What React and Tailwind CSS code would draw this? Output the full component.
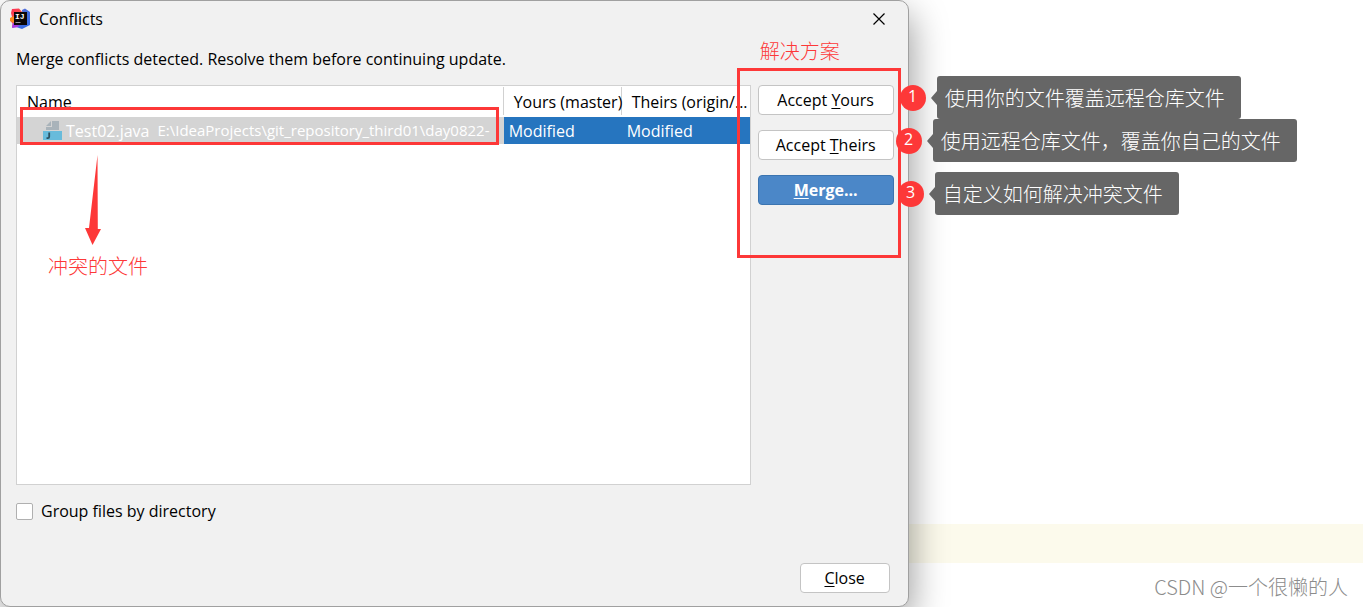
import React from "react";

function IdeaLogo() {
  return (
    <svg viewBox="0 0 22 22" className="size-[22px] shrink-0" aria-hidden="true">
      <defs>
        <linearGradient id="warm" x1="0" y1="0" x2="0.6" y2="1">
          <stop offset="0" stopColor="#fe2857" />
          <stop offset="0.5" stopColor="#f9504a" />
          <stop offset="1" stopColor="#b32bd8" />
        </linearGradient>
        <linearGradient id="cool" x1="0" y1="0" x2="1" y2="1">
          <stop offset="0" stopColor="#8a5bc8" />
          <stop offset="0.4" stopColor="#4a6fdc" />
          <stop offset="1" stopColor="#2f6be8" />
        </linearGradient>
      </defs>
      <path d="M3 1 10 .500l4 4.500-1 13-5 .5L3 19.500l.5-4L1.500 13 3 9 2 5z" fill="url(#warm)" />
      <path d="M1 10 5 8v7l-4-2z" fill="#fd8a1e" />
      <path d="m13 2 3-1.500 5 3.500v13l-8 4-9-3 10-2z" fill="url(#cool)" />
      <path d="M3 20l1-5 7 3-4 1.500z" fill="#a63be0" />
      <rect x="5" y="4" width="13" height="13" fill="#0b0708" />
      <text x="6" y="11" fontSize="8" fontWeight="700" fontFamily="Liberation Mono, monospace" fill="#fff">
        IJ
      </text>
      <rect x="6.500" y="14" width="5" height="1" fill="#999" />
    </svg>
  );
}

function JavaFileIcon() {
  return (
    <svg viewBox="0 0 19 19" className="size-[19px] shrink-0" aria-hidden="true">
      <path d="M9 0h7v9H3V6h6z" fill="#a9b3ba" />
      <path d="M8 0v5H3z" fill="#a9b3ba" />
      <rect y="10" width="19" height="9" fill="#68bbdb" />
      <path d="M6.200 11.500v4.200q0 1.500-1.400 1.500H3.500" fill="none" stroke="#2b4f5e" strokeWidth="1.800" />
    </svg>
  );
}

function CloseGlyph() {
  return (
    <svg viewBox="0 0 12 12" className="size-3" aria-hidden="true">
      <path d="M.5.5l11 11M11.500.5l-11 11" stroke="#000" strokeWidth="1.200" />
    </svg>
  );
}

function Callout({ number, place, children }) {
  return (
    <div className={`absolute z-30 flex h-[43px] items-center whitespace-nowrap text-white ${place}`}>
      <span className="flex size-[26px] items-center justify-center rounded-full bg-[#fd3838] pb-1 text-base leading-none">
        {number}
      </span>
      <span className="ml-[5px] h-0 w-0 border-y-[7px] border-r-[6px] border-y-transparent border-r-[#666]" />
      <span className="flex h-full items-center rounded-[3px] bg-[#666] pt-px pr-4 pl-2 font-['Noto_Sans_CJK_SC',sans-serif] text-xl font-light">
        {children}
      </span>
    </div>
  );
}

const plain = "h-[30px] rounded border border-[#c4c4c4] bg-white";
const underline = "underline decoration-1 underline-offset-2";
const note = "font-['Noto_Sans_CJK_SC',sans-serif] text-xl leading-7 font-light whitespace-nowrap text-[#fd3838]";

function ConflictsTable() {
  return (
    <div className="h-[400px] min-w-0 flex-1 border border-[#d1d1d1] bg-white">
      <table className="w-full table-fixed border-collapse text-left">
        <colgroup>
          <col />
          <col className="w-[118px]" />
          <col className="w-[128px]" />
        </colgroup>
        <thead>
          <tr className="h-[31px]">
            {["Name", "Yours (master)", "Theirs (origin/..."].map((title, i) => (
              <th key={title} scope="col" className="p-0 font-normal">
                <div
                  className={`mb-px h-[28px] pl-[10px] leading-[30px] whitespace-nowrap ${i < 2 ? "border-r border-[#d1d1d1]" : ""}`}
                >
                  {title}
                </div>
              </th>
            ))}
          </tr>
        </thead>
        <tbody>
          <tr className="h-[27px] text-white">
            <td className="bg-[#d4d4d4] p-0">
              <div className="relative">
                <div className="flex h-[27px] items-center overflow-hidden pl-[26px] whitespace-nowrap">
                  <JavaFileIcon />
                  <span className="ml-1">Test02.java</span>
                  <span className="ml-2 text-[15px]">E:\IdeaProjects\git_repository_third01\day0822-</span>
                </div>
                <div className="absolute -top-[10px] right-[5px] -bottom-px left-[3px] border-3 border-[#fd3838]" />
                <FileNote />
              </div>
            </td>
            <td className="bg-[#2675bf] p-0 pl-[5px]">Modified</td>
            <td className="bg-[#2675bf] p-0 pl-[5px]">Modified</td>
          </tr>
        </tbody>
      </table>
    </div>
  );
}

function FileNote() {
  return (
    <div className="absolute top-[38px] left-[31px] text-[#fd3838]">
      <svg viewBox="0 0 16 90" className="ml-[37px] h-[90px] w-4" aria-hidden="true">
        <path d="M12.500 0l.3 74H16L7.500 90 0 73h4z" fill="#fd3838" />
      </svg>
      <p className={`mt-[7px] ${note}`}>冲突的文件</p>
    </div>
  );
}

export default function App() {
  return (
    <main className="flex min-h-screen overflow-hidden bg-white font-['Open_Sans','Noto_Sans_CJK_SC',sans-serif] text-base text-black">
      <section className="relative z-10 flex w-2/3 flex-col rounded-[10px] border border-[#a0a0a0] bg-[#f1f1f1] shadow-[2px_14px_36px_rgba(0,0,0,0.4)]">
        <header className="flex h-9 items-center gap-2 pr-[23px] pl-2">
          <IdeaLogo />
          <h1 className="flex-1">Conflicts</h1>
          <button type="button" aria-label="Close window">
            <CloseGlyph />
          </button>
        </header>
        <p className="flex h-12 items-center px-[15px] pb-1">
          Merge conflicts detected. Resolve them before continuing update.
        </p>
        <div className="flex gap-[7px] pr-[14px] pl-[15px]">
          <ConflictsTable />
          <aside className="relative flex w-[136px] flex-col gap-[15px]">
            <p className={`absolute -top-12 left-[2px] ${note}`}>解决方案</p>
            <div className="pointer-events-none absolute -top-[17px] -left-[21px] z-20 h-[190px] w-[164px] border-3 border-[#fd3838]" />
            <button type="button" className={plain}>
              Accept <span className={underline}>Y</span>ours
            </button>
            <button type="button" className={plain}>
              Accept <span className={underline}>T</span>heirs
            </button>
            <button
              type="button"
              className="h-[30px] rounded border border-[#3b74b0] bg-[#4b87c8] font-bold text-white"
            >
              <span className={underline}>M</span>erge...
            </button>
            <Callout number="1" place="-top-[9px] left-[142px]">使用你的文件覆盖远程仓库文件</Callout>
            <Callout number="2" place="top-[34px] left-[138px]">使用远程仓库文件，覆盖你自己的文件</Callout>
            <Callout number="3" place="top-[87px] left-[140px]">自定义如何解决冲突文件</Callout>
          </aside>
        </div>
        <label className="mt-[14px] flex h-6 items-center gap-2 self-start pl-[15px]">
          <input
            type="checkbox"
            className="size-[17px] appearance-none rounded-[2px] border border-[#b0b0b0] bg-white checked:bg-[#4b87c8]"
          />
          Group files by directory
        </label>
        <footer className="mt-auto flex justify-end pr-[18px] pb-[13px]">
          <button type="button" className={`w-[90px] ${plain}`}>
            <span className={underline}>C</span>lose
          </button>
        </footer>
      </section>
      <div className="flex flex-1 flex-col">
        <div className="flex-1" />
        <div className="h-[39px] bg-[#fcfaec]" />
        <footer className="flex h-11 items-center justify-end pt-1 pr-[15px] font-['Noto_Sans_CJK_SC',sans-serif] text-xl font-light text-[#8c8c8c]">
          CSDN @一个很懒的人
        </footer>
      </div>
    </main>
  );
}
